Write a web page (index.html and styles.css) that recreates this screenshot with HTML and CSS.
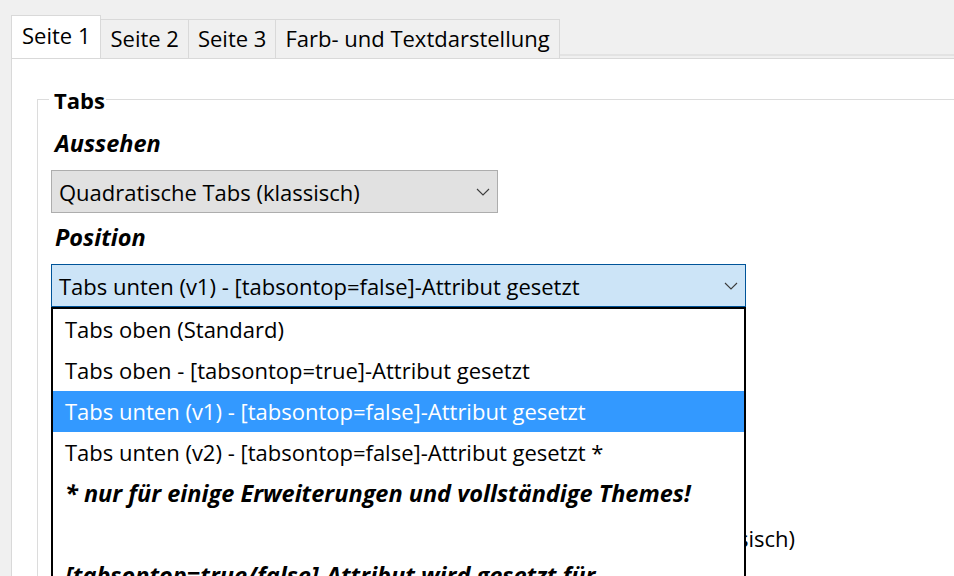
FILE: index.html
```html
<!DOCTYPE html>
<html lang="de">
<head>
<meta charset="utf-8">
<title>Einstellungen</title>
<link rel="stylesheet" href="styles.css">
</head>
<body>
<div class="window">
  <div class="tabstrip">
    <div class="tab tab-active">Seite 1</div>
    <div class="tab">Seite 2</div>
    <div class="tab">Seite 3</div>
    <div class="tab">Farb- und Textdarstellung</div>
    <div class="tab-filler"></div>
  </div>
  <div class="panel">
    <fieldset class="group">
      <legend class="group-title">Tabs</legend>
      <div class="label label-first">Aussehen</div>
      <div class="select select-normal">
        <span class="select-text">Quadratische Tabs (klassisch)</span>
        <svg class="chevron" width="14" height="8" viewBox="0 0 14 8"><polyline points="1,1 7,7 13,1" fill="none" stroke="#3c3c3c" stroke-width="1.1"/></svg>
      </div>
      <div class="label">Position</div>
      <div class="select-wrap">
        <div class="select select-open">
          <span class="select-text">Tabs unten (v1) - [tabsontop=false]-Attribut gesetzt</span>
          <svg class="chevron" width="14" height="8" viewBox="0 0 14 8"><polyline points="1,1 7,7 13,1" fill="none" stroke="#3c3c3c" stroke-width="1.1"/></svg>
        </div>
        <ul class="dropdown">
          <li class="option">Tabs oben (Standard)</li>
          <li class="option">Tabs oben - [tabsontop=true]-Attribut gesetzt</li>
          <li class="option option-selected">Tabs unten (v1) - [tabsontop=false]-Attribut gesetzt</li>
          <li class="option">Tabs unten (v2) - [tabsontop=false]-Attribut gesetzt *</li>
          <li class="option option-note">* nur für einige Erweiterungen und vollständige Themes!</li>
          <li class="option option-empty"></li>
          <li class="option option-note">[tabsontop=true/false]-Attribut wird gesetzt für</li>
        </ul>
      </div>
      <div class="hidden-line">Abstände und Rahmen wie bei quadratischen Tabs (klassisch)</div>
    </fieldset>
  </div>
</div>
</body>
</html>
```

FILE: styles.css
```css
html, body {
  margin: 0;
  padding: 0;
  height: 100%;
  overflow: hidden;
}
body {
  background: #f0f0f0;
  font-family: "Open Sans", "Noto Sans", "Liberation Sans", sans-serif;
  font-size: 22px;
  color: #000;
}
.window {
  display: flex;
  flex-direction: column;
  height: 100%;
}
.tabstrip {
  display: flex;
  align-items: flex-end;
  height: 58px;
  padding-left: 11px;
  flex: none;
}
.tab {
  box-sizing: border-box;
  height: 39px;
  padding: 0 9px;
  line-height: 37px;
  border: 1px solid #d9d9d9;
  border-bottom: none;
  border-left: none;
  background: #f0f0f0;
  white-space: nowrap;
}
.tab-active {
  height: 43px;
  line-height: 38px;
  background: #fff;
  border-left: 1px solid #d9d9d9;
  padding: 0 10px;
}
.tab-filler {
  flex: 1;
  height: 2px;
  margin-bottom: 2px;
  background: #e3e3e3;
}
.panel {
  flex: 1;
  margin-left: 11px;
  border-top: 1px solid #d9d9d9;
  border-left: 1px solid #d9d9d9;
  background: #fff;
  padding: 25px 0 0 25px;
}
.group {
  margin: 0 -40px 0 0;
  padding: 0 0 0 13px;
  border: 1px solid #dcdcdc;
  min-height: 600px;
}
.group-title {
  font-weight: bold;
  padding: 2px 1px 0 5px;
  margin-left: -2px;
  line-height: 28px;
}
.label {
  font-weight: bold;
  font-style: italic;
  font-size: 23.5px;
  padding-left: 4px;
  line-height: 28px;
  margin: 0 0 13px 0;
}
.label-first {
  margin-top: 15px;
}
.select {
  box-sizing: border-box;
  display: flex;
  align-items: center;
  justify-content: space-between;
  height: 43px;
  padding: 0 6px 0 7px;
  border: 1px solid #adadad;
  background: #e1e1e1;
  white-space: nowrap;
}
.select-normal {
  width: 447px;
  margin-bottom: 10px;
}
.select-open {
  width: 695px;
  background: #cce4f7;
  border-color: #005499;
}
.chevron {
  flex: none;
  margin-right: 1px;
}
.select-wrap {
  position: relative;
  width: 695px;
}
.dropdown {
  position: absolute;
  top: 100%;
  left: 0;
  width: 695px;
  box-sizing: border-box;
  margin: 0;
  padding: 0;
  list-style: none;
  border: 2px solid #000;
  border-bottom: none;
  background: #fff;
  z-index: 2;
}
.option {
  height: 41px;
  line-height: 40px;
  padding-left: 12px;
  white-space: nowrap;
}
.option-selected {
  background: #3399ff;
  color: #fff;
}
.option-note {
  font-weight: bold;
  font-style: italic;
  font-size: 23.5px;
}
.hidden-line {
  width: 744px;
  text-align: right;
  margin-top: 217px;
  line-height: 28px;
  white-space: nowrap;
}
```
